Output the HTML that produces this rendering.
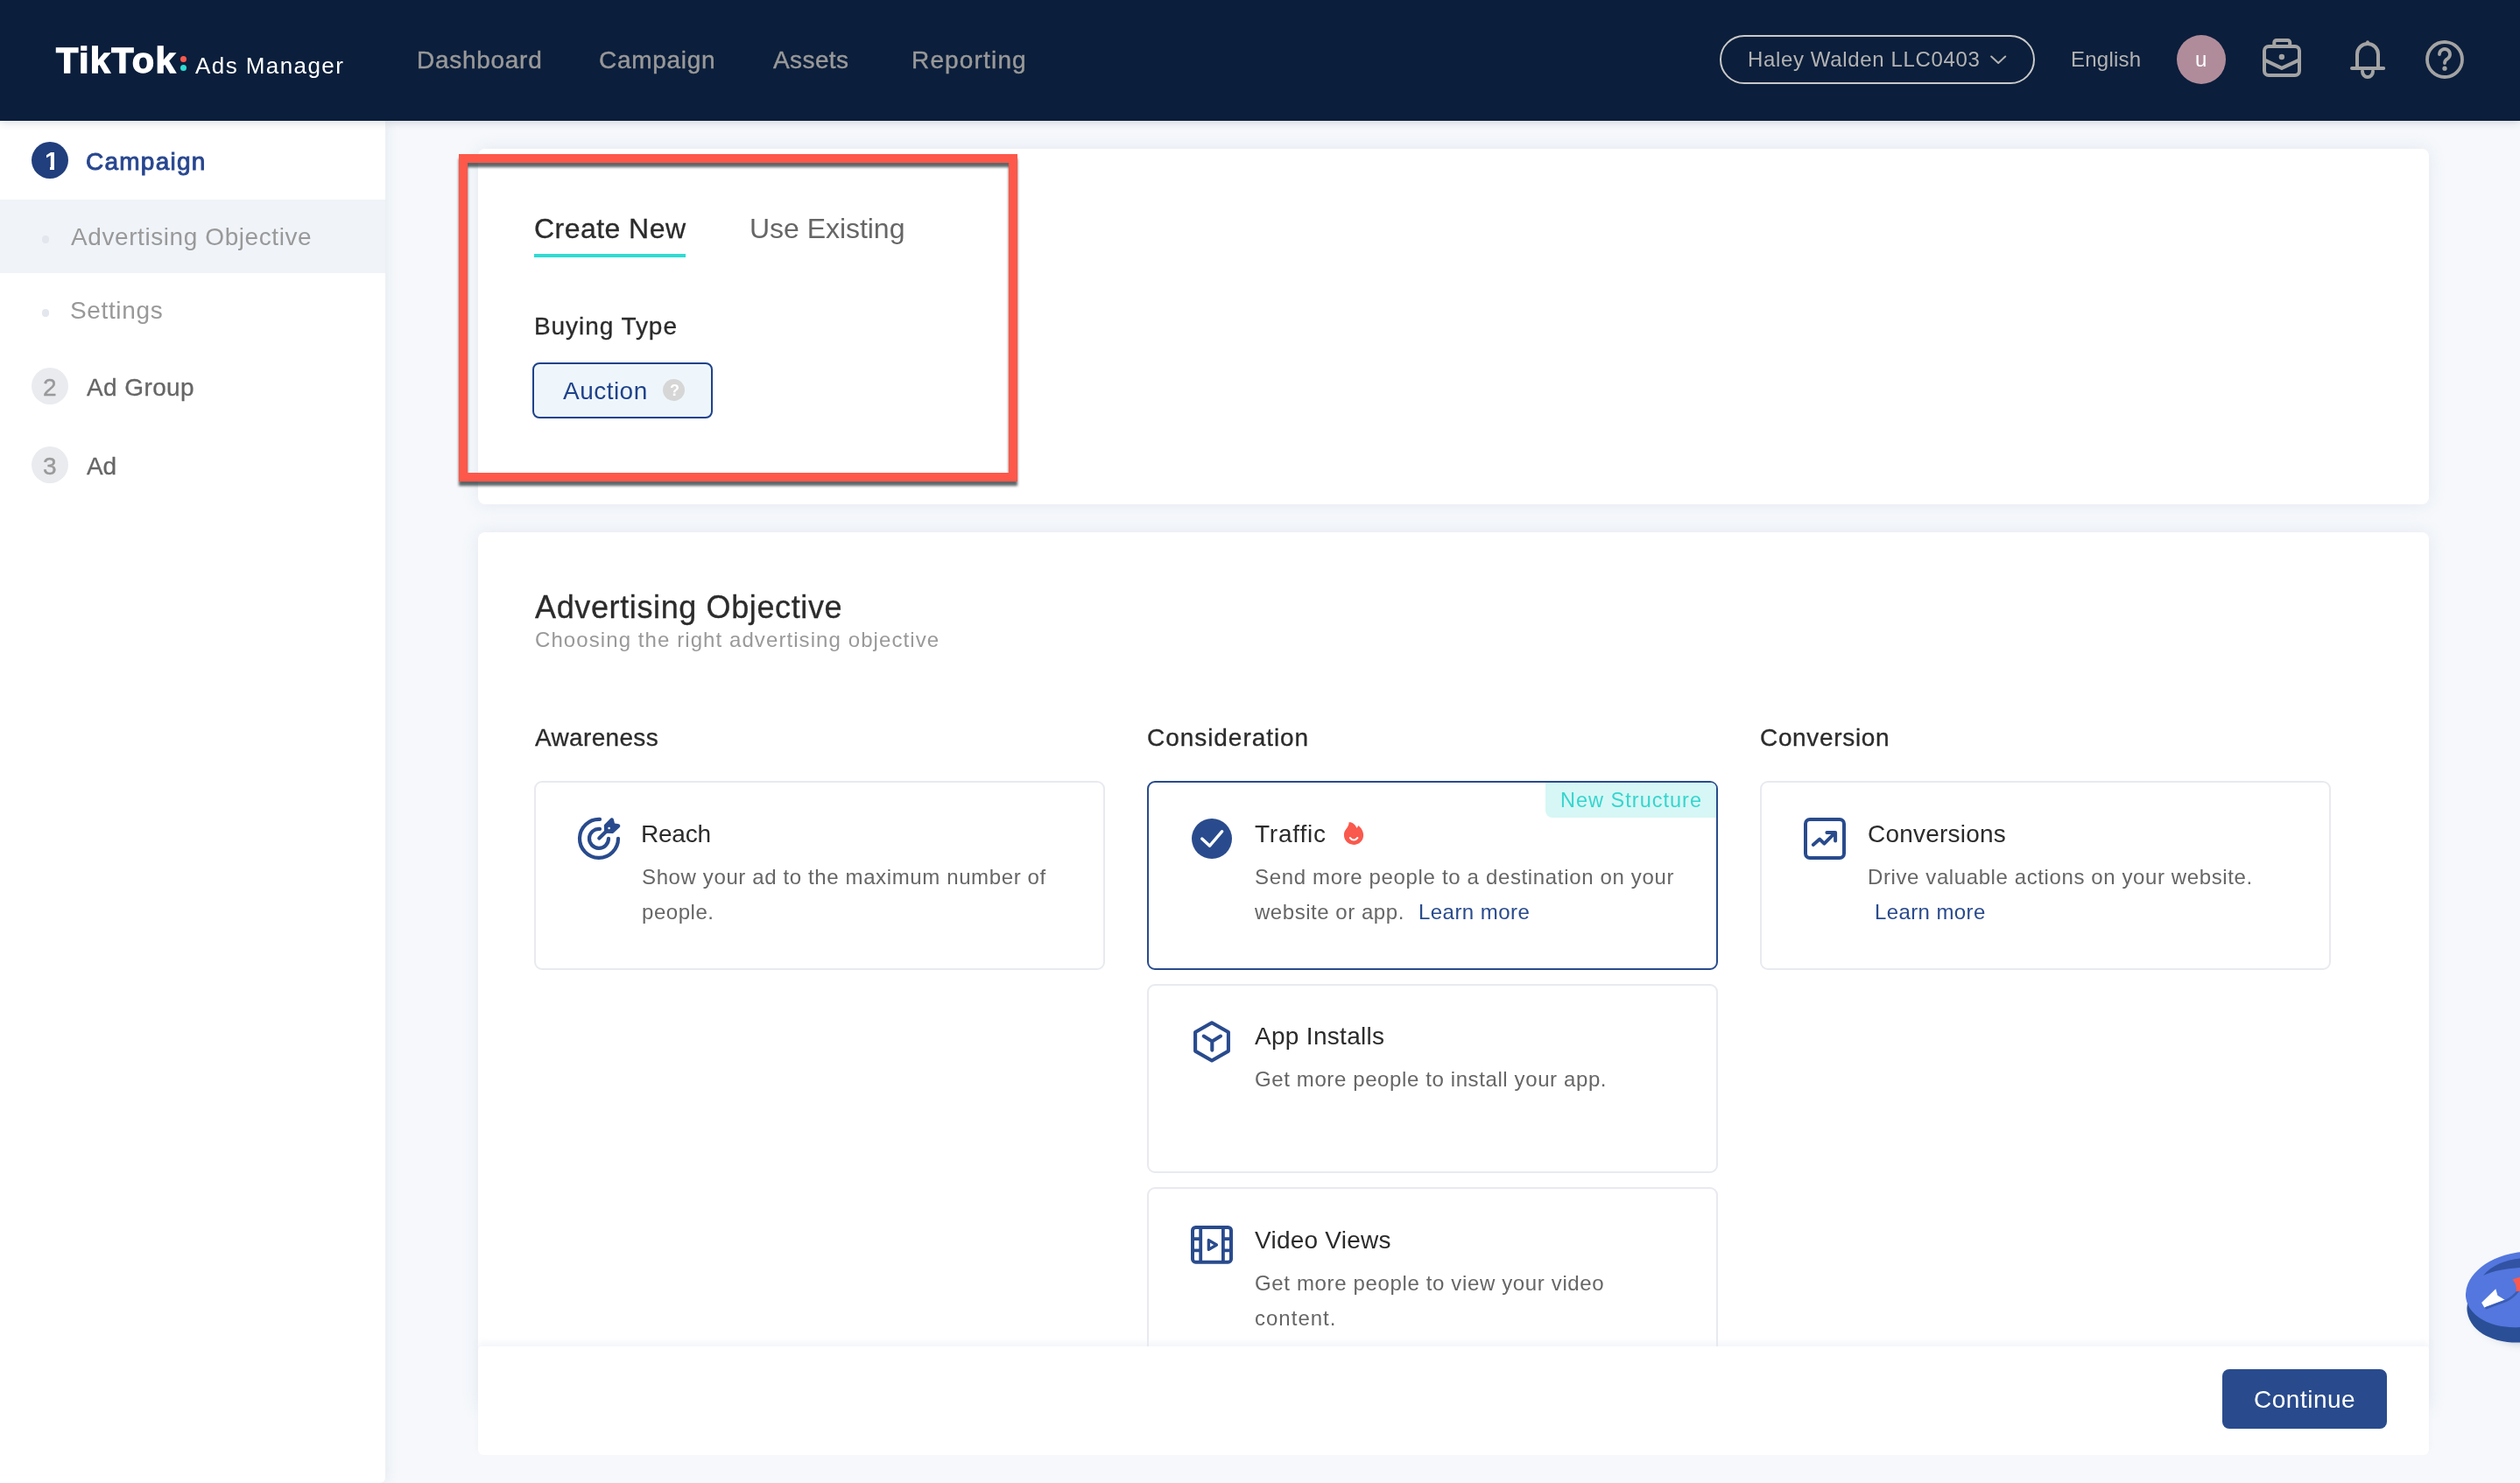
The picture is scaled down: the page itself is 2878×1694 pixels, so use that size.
<!DOCTYPE html>
<html lang="en"><head><meta charset="utf-8"><title>TikTok Ads Manager</title>
<style>
html,body{margin:0;padding:0}
body{width:2878px;height:1694px;position:relative;overflow:hidden;background:#f6f8fb;font-family:"Liberation Sans",sans-serif;}
.t{position:absolute;line-height:1;white-space:nowrap;will-change:transform;}
.abs{position:absolute}
#hdr{position:absolute;left:0;top:0;width:2878px;height:138px;background:#0b1e3b;box-shadow:0 2px 9px rgba(30,50,80,.17);z-index:5}
#side{position:absolute;left:0;top:138px;width:440px;height:1556px;background:#fff;border-radius:0 0 6px 0;box-shadow:2px 0 14px rgba(200,212,228,.38)}
.card{position:absolute;background:#fff;border-radius:8px;box-shadow:0 0 18px rgba(205,216,230,.45)}
.oc{position:absolute;width:648px;height:212px;border:2px solid #e8eaf0;border-radius:9px;background:#fff}
.oc.sel{border-color:#294b8d}
.circ{position:absolute;width:42px;height:42px;border-radius:50%}
svg{position:absolute;overflow:visible}
</style></head><body>
<div class="card" style="left:546px;top:170px;width:2228px;height:406px"></div>
<div class="card" style="left:546px;top:608px;width:2228px;height:1000px;border-radius:8px 8px 0 0"></div>
<span class="t" style="left:610.01px;top:244.91px;font-size:32px;color:#2b2b2b;letter-spacing:0.451px;-webkit-text-stroke:0.3px #2b2b2b;">Create New</span>
<div class="abs" style="left:610px;top:290px;width:173px;height:4px;background:#2fdbd2"></div>
<span class="t" style="left:856.22px;top:244.91px;font-size:32px;color:#666;letter-spacing:-0.038px;">Use Existing</span>
<span class="t" style="left:609.77px;top:358.87px;font-size:28px;color:#2b2b2b;letter-spacing:0.936px;-webkit-text-stroke:0.3px #2b2b2b;">Buying Type</span>
<div class="abs" style="left:608px;top:414px;width:202px;height:60px;border:2px solid #1f428b;border-radius:8px;background:#eef6fb"></div>
<span class="t" style="left:643.30px;top:433.10px;font-size:28px;color:#1f428b;letter-spacing:0.468px;">Auction</span>
<div class="abs" style="left:757px;top:433.2px;width:25px;height:25px;border-radius:50%;background:#d6d6d6"></div>
<span class="t" style="left:764.50px;top:437.26px;font-size:18px;color:#fff;font-weight:700;">?</span>
<span class="t" style="left:611.20px;top:675.53px;font-size:36px;color:#2b2b2b;letter-spacing:0.624px;-webkit-text-stroke:0.3px #2b2b2b;">Advertising Objective</span>
<span class="t" style="left:610.82px;top:718.94px;font-size:24px;color:#999;letter-spacing:1.082px;">Choosing the right advertising objective</span>
<span class="t" style="left:611.10px;top:828.60px;font-size:28px;color:#2b2b2b;letter-spacing:0.336px;-webkit-text-stroke:0.3px #2b2b2b;">Awareness</span>
<span class="t" style="left:1310.37px;top:828.60px;font-size:28px;color:#2b2b2b;letter-spacing:0.951px;-webkit-text-stroke:0.3px #2b2b2b;">Consideration</span>
<span class="t" style="left:2010.37px;top:828.60px;font-size:28px;color:#2b2b2b;letter-spacing:0.660px;-webkit-text-stroke:0.3px #2b2b2b;">Conversion</span>
<div class="oc" style="left:610px;top:892px"></div>
<div class="oc sel" style="left:1310px;top:892px"></div>
<div class="oc" style="left:2010px;top:892px"></div>
<div class="oc" style="left:1310px;top:1124px"></div>
<div class="oc" style="left:1310px;top:1356px"></div>
<span class="t" style="left:732.39px;top:938.56px;font-size:28px;color:#2b2b2b;letter-spacing:-0.211px;">Reach</span>
<span class="t" style="left:733.25px;top:989.88px;font-size:24px;color:#666;letter-spacing:0.620px;">Show your ad to the maximum number of</span>
<span class="t" style="left:733.09px;top:1029.88px;font-size:24px;color:#666;letter-spacing:0.549px;">people.</span>
<div class="abs" style="left:1765px;top:894px;width:195px;height:40px;background:#d6f7f5;border-radius:0 6px 0 8px"></div>
<span class="t" style="left:1781.80px;top:902.93px;font-size:23.5px;color:#36d5ce;letter-spacing:1.011px;">New Structure</span>
<div class="circ" style="left:1361px;top:935px;width:46px;height:46px;background:#294b8d"></div>
<svg style="left:1361px;top:935px" width="46" height="46" viewBox="1361 935 46 46"><path d="M1372.7 958.1 L1381.6 966.2 L1395.7 949.7" fill="none" stroke="#fff" stroke-width="3.4" stroke-linecap="round" stroke-linejoin="round"/></svg>
<span class="t" style="left:1432.63px;top:938.56px;font-size:28px;color:#2b2b2b;letter-spacing:0.792px;">Traffic</span>
<span class="t" style="left:1432.65px;top:989.68px;font-size:24px;color:#666;letter-spacing:0.654px;">Send more people to a destination on your</span>
<span class="t" style="left:1433.42px;top:1029.68px;font-size:24px;color:#666;letter-spacing:0.538px;">website or app.</span>
<span class="t" style="left:1620.00px;top:1029.68px;font-size:24px;color:#294b8d;letter-spacing:0.448px;">Learn more</span>
<span class="t" style="left:1433.30px;top:1169.60px;font-size:28px;color:#2b2b2b;letter-spacing:0.304px;">App Installs</span>
<span class="t" style="left:1432.87px;top:1220.68px;font-size:24px;color:#666;letter-spacing:0.609px;">Get more people to install your app.</span>
<span class="t" style="left:1433.30px;top:1403.10px;font-size:28px;color:#2b2b2b;letter-spacing:0.244px;">Video Views</span>
<span class="t" style="left:1432.87px;top:1453.68px;font-size:24px;color:#666;letter-spacing:0.641px;">Get more people to view your video</span>
<span class="t" style="left:1433.00px;top:1493.68px;font-size:24px;color:#666;letter-spacing:1.009px;">content.</span>
<span class="t" style="left:2132.60px;top:938.56px;font-size:28px;color:#2b2b2b;letter-spacing:0.212px;">Conversions</span>
<span class="t" style="left:2133.00px;top:989.68px;font-size:24px;color:#666;letter-spacing:0.602px;">Drive valuable actions on your website.</span>
<span class="t" style="left:2141.10px;top:1029.68px;font-size:24px;color:#294b8d;letter-spacing:0.395px;">Learn more</span>
<svg style="left:658px;top:932px" width="52" height="52" viewBox="658 932 52 52"><g fill="none" stroke="#294b8d" stroke-width="4.2" stroke-linecap="round" stroke-linejoin="round"><path d="M685 935.9 A22 22 0 1 0 706 957.8"/><path d="M685 946.9 A11 11 0 1 0 695 957.8"/><path d="M684.3 957.6 L693 948.9"/><path d="M698.8 936.3 L691.9 943.2 L692.2 949.6 L699.2 950 L706.2 943.4 L700.3 942.4 Z" fill="#294b8d"/></g><circle cx="695.6" cy="946" r="1.3" fill="#fff"/></svg>
<svg style="left:1534px;top:938px" width="24" height="28" viewBox="1534 938 24 28"><path d="M1540.6 939.3 C1543.4 938.6 1547.8 941.2 1549.4 945.8 C1550.4 945 1550.9 944 1551 943 C1555 945.6 1557.1 950 1557.1 954 C1557.1 960.4 1552.2 964.9 1546.1 964.9 C1540 964.9 1534.9 960.4 1534.9 953.6 C1534.9 947.4 1540.6 945.6 1540.6 939.3 Z" fill="#fa594d"/><path d="M1541.8 957 Q1546.1 962.2 1550.4 957" fill="none" stroke="#fff" stroke-width="2" stroke-linecap="round"/></svg>
<svg style="left:1360px;top:1164px" width="48" height="52" viewBox="1360 1164 48 52"><g fill="none" stroke="#294b8d" stroke-width="4.1" stroke-linecap="round" stroke-linejoin="round"><path d="M1384 1168.2 L1402.9 1179 L1402.9 1200.6 L1384 1211.5 L1365.1 1200.6 L1365.1 1179 Z"/><path d="M1374.7 1183.6 L1384.3 1189.4 L1394 1183.6 M1384.3 1189.4 L1384.3 1199.6"/></g></svg>
<svg style="left:1358px;top:1398px" width="52" height="48" viewBox="1358 1398 52 48"><g fill="none" stroke="#294b8d" stroke-width="3.8" stroke-linejoin="round"><rect x="1362" y="1402" width="44" height="39.7" rx="3.5" stroke-width="4"/><path d="M1371.2 1402 V1441.7 M1396.9 1402 V1441.7 M1362 1415.2 H1371.2 M1362 1428.4 H1371.2 M1396.9 1415.2 H1406 M1396.9 1428.4 H1406"/><path d="M1380.4 1416.6 L1380.4 1427.4 L1389.4 1422 Z" stroke-width="3.4"/></g></svg>
<svg style="left:2058px;top:932px" width="52" height="52" viewBox="2058 932 52 52"><g fill="none" stroke="#294b8d" stroke-width="4" stroke-linecap="round" stroke-linejoin="round"><rect x="2062" y="936" width="44" height="44" rx="5"/><path d="M2070.8 965 L2078.2 958.6 L2083.4 963.6 L2095.6 951.4 M2086.4 950.9 L2096.1 950.9 L2096.1 960.6"/></g></svg>
<svg style="left:2790px;top:1410px" width="88" height="140" viewBox="2790 1410 88 140"><defs><filter id="cb" x="-30%" y="-30%" width="160%" height="160%"><feGaussianBlur stdDeviation="4"/></filter></defs><ellipse cx="2884" cy="1492" rx="62" ry="44" fill="#9aa6bd" opacity=".45" filter="url(#cb)"/><ellipse cx="2881.5" cy="1489" rx="64.5" ry="44" fill="#2b4f97" transform="rotate(-9 2881.5 1489)"/><ellipse cx="2879.5" cy="1473" rx="64" ry="42.5" fill="#5377de" transform="rotate(-9 2879.5 1473)"/><path d="M2836 1457 C2846 1445 2862 1439 2878 1437.5 L2878 1448 C2864 1449 2848 1451 2836 1457 Z" fill="#3253a3"/><path d="M2834.1 1487.9 L2850.3 1472.3 L2852.4 1479.8 L2860.5 1484.7 L2837.3 1493.6 Z" fill="#fff"/><path d="M2838.5 1494.5 L2861.5 1486 C2866 1484 2872 1480 2876 1474" fill="none" stroke="#3a5cb4" stroke-width="2.5"/><path d="M2869.2 1461.5 L2878 1458.8 L2878 1474.4 L2873.5 1475.5 C2874.5 1470 2873 1465 2869.2 1461.5 Z" fill="#fa594d"/></svg>
<div class="abs" style="left:546px;top:1538px;width:2228px;height:124px;background:#fff;border-radius:4px 4px 6px 6px;box-shadow:0 -5px 7px rgba(228,234,242,.42)"></div>
<div class="abs" style="left:2538px;top:1564px;width:188px;height:68px;border-radius:8px;background:#294b8d"></div>
<span class="t" style="left:2574.25px;top:1584.50px;font-size:28px;color:#fff;letter-spacing:0.510px;">Continue</span>
<div class="abs" style="left:524px;top:176px;width:618px;height:354px;border:10px solid #fe584a;filter:drop-shadow(0 5.5px 1.6px rgba(0,14,18,.63))"></div>
<div id="side"></div>
<div class="abs" style="left:0;top:228px;width:440px;height:84px;background:#f0f3f8"></div>
<div class="circ" style="left:36px;top:162px;background:#213e7d"></div>
<span class="t" style="left:50.60px;top:169.23px;font-size:29.5px;color:#fff;font-weight:700;">1</span>
<div class="abs" style="left:49px;top:190px;width:8px;height:5px;background:#213e7d"></div><div class="abs" style="left:61.9px;top:190px;width:6px;height:5px;background:#213e7d"></div>
<span class="t" style="left:97.90px;top:171.30px;font-size:28px;color:#27468f;letter-spacing:1.242px;-webkit-text-stroke:0.9px #27468f;">Campaign</span>
<div class="abs" style="left:47.8px;top:269.3px;width:8.6px;height:8.6px;border-radius:50%;background:#e3e6ec"></div>
<span class="t" style="left:81.00px;top:257.10px;font-size:28px;color:#999;letter-spacing:0.582px;">Advertising Objective</span>
<div class="abs" style="left:47.8px;top:353.3px;width:8.6px;height:8.6px;border-radius:50%;background:#e3e6ec"></div>
<span class="t" style="left:80.16px;top:341.10px;font-size:28px;color:#999;letter-spacing:0.642px;">Settings</span>
<div class="circ" style="left:36px;top:420px;background:#e9ebef"></div>
<span class="t" style="left:49.00px;top:429.30px;font-size:28px;color:#999;-webkit-text-stroke:0.4px #999;">2</span>
<span class="t" style="left:99.30px;top:428.90px;font-size:28px;color:#666;letter-spacing:0.400px;-webkit-text-stroke:0.3px #666;">Ad Group</span>
<div class="circ" style="left:36px;top:510px;background:#e9ebef"></div>
<span class="t" style="left:49.00px;top:519.30px;font-size:28px;color:#999;-webkit-text-stroke:0.4px #999;">3</span>
<span class="t" style="left:99.30px;top:518.90px;font-size:28px;color:#666;letter-spacing:-0.245px;-webkit-text-stroke:0.3px #666;">Ad</span>
<div id="hdr"></div>
<div class="abs" style="left:0;top:0;z-index:6">
<span class="t" style="left:63.80px;top:48.47px;font-size:41.5px;color:#fff;letter-spacing:1.347px;font-weight:700;-webkit-text-stroke:1.3px #fff;">TikTok</span>
<div class="abs" style="left:205.8px;top:63.5px;width:7px;height:7px;border-radius:50%;background:#fb5a4e"></div>
<div class="abs" style="left:205.8px;top:73.6px;width:7px;height:7px;border-radius:50%;background:#2fdbd2"></div>
<span class="t" style="left:223.20px;top:61.99px;font-size:26px;color:#fff;letter-spacing:1.422px;">Ads Manager</span>
<span class="t" style="left:475.84px;top:54.60px;font-size:28px;color:#999;letter-spacing:0.716px;-webkit-text-stroke:0.4px #999;">Dashboard</span>
<span class="t" style="left:684.41px;top:54.60px;font-size:28px;color:#999;letter-spacing:0.715px;-webkit-text-stroke:0.4px #999;">Campaign</span>
<span class="t" style="left:883.00px;top:54.60px;font-size:28px;color:#999;letter-spacing:0.402px;-webkit-text-stroke:0.4px #999;">Assets</span>
<span class="t" style="left:1040.97px;top:54.60px;font-size:28px;color:#999;letter-spacing:1.161px;-webkit-text-stroke:0.4px #999;">Reporting</span>
<div class="abs" style="left:1964px;top:40px;width:356px;height:52px;border:2px solid #c9c9c9;border-radius:28px"></div>
<span class="t" style="left:1995.60px;top:56.18px;font-size:24px;color:#b3b3b3;letter-spacing:0.640px;">Haley Walden LLC0403</span>
<svg style="left:2270px;top:60px" width="24" height="16" viewBox="2270 60 24 16"><path d="M2274.2 64.5 L2282.2 72 L2290.2 64.5" fill="none" stroke="#b3b3b3" stroke-width="2" stroke-linecap="round" stroke-linejoin="round"/></svg>
<span class="t" style="left:2365.10px;top:56.18px;font-size:24px;color:#b3b3b3;letter-spacing:0.233px;">English</span>
<div class="abs" style="left:2485.5px;top:40px;width:56px;height:56px;border-radius:50%;background:#b08c9b"></div>
<span class="t" style="left:2506.50px;top:55.68px;font-size:24px;color:#fff;">u</span>
<svg style="left:2580px;top:40px" width="52" height="52" viewBox="2580 40 52 52"><g fill="none" stroke="#a3a3a3" stroke-width="4" stroke-linejoin="round"><rect x="2586" y="53" width="40" height="33" rx="5"/><path d="M2597.3 52.5 V48.5 a2.5 2.5 0 0 1 2.5 -2.5 h12.9 a2.5 2.5 0 0 1 2.5 2.5 V52.5"/><path d="M2586.5 68.6 L2605.9 77.9 L2625.5 68.6"/></g><circle cx="2605.9" cy="65" r="3.2" fill="#a3a3a3"/></svg>
<svg style="left:2680px;top:40px" width="48" height="54" viewBox="2680 40 48 54"><g fill="none" stroke="#a3a3a3" stroke-width="4" stroke-linecap="round"><path d="M2692 78 V62 a12 12 0 0 1 24 0 V78"/><path d="M2686 78 H2722.2"/><path d="M2698 81.5 a6 6.5 0 0 0 12 0"/></g><circle cx="2704" cy="48.3" r="2" fill="#a3a3a3"/></svg>
<svg style="left:2768px;top:44px" width="48" height="48" viewBox="2768 44 48 48"><g fill="none" stroke="#a3a3a3" stroke-width="3.8" stroke-linecap="round"><circle cx="2792" cy="68" r="20"/><path d="M2786 62 a6 6 0 1 1 9.2 5.1 c-2.2 1.3 -3.2 2.4 -3.2 4.9"/></g><circle cx="2792" cy="78.2" r="2.6" fill="#a3a3a3"/></svg>
</div>
</body></html>
